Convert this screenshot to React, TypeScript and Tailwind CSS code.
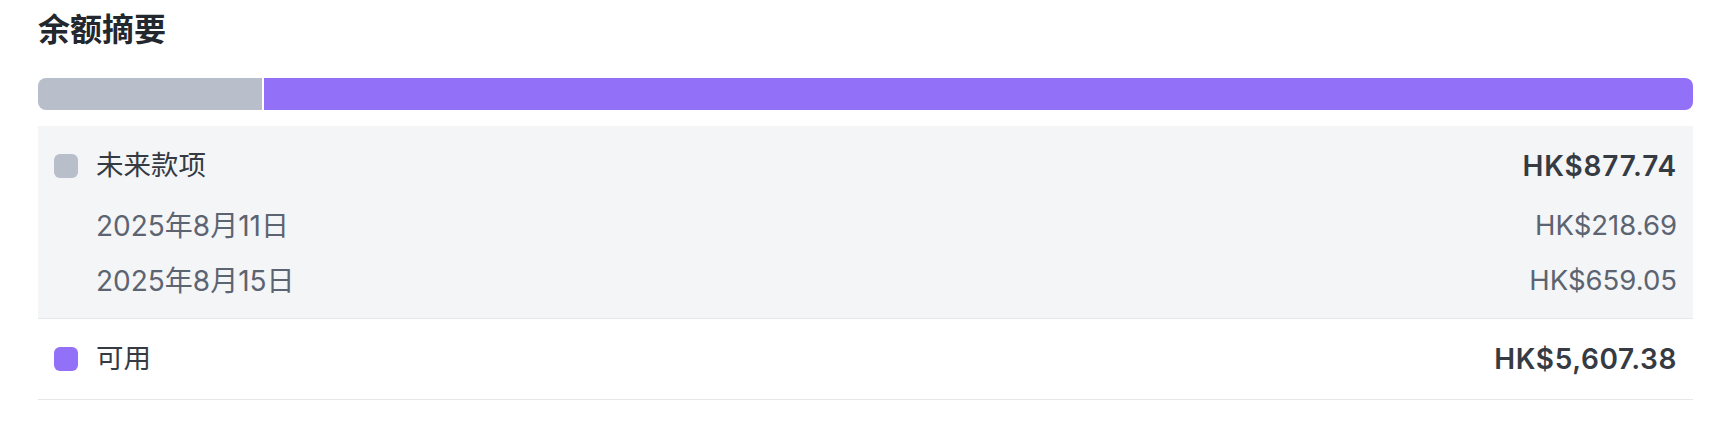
export default function App() {
  const future = 877.74;
  const available = 5607.38;
  const pct = (future / (future + available)) * 100;

  const items = [
    { date: "2025年8月11日", amount: "HK$218.69" },
    { date: "2025年8月15日", amount: "HK$659.05" },
  ];

  return (
    <div
      className="bg-white w-[1724px] h-[430px] pl-[38px] pr-[31px] pt-[10px]"
      style={{ fontFamily: 'Inter, "Noto Sans CJK SC", sans-serif' }}
    >
      <h2 className="text-[32px] leading-[40px] font-semibold text-[#23272e]">余额摘要</h2>

      <div className="mt-[28px] flex h-[32px] w-full gap-[2px] rounded-[8px] overflow-hidden">
        <div className="h-full bg-[#b8bfca]" style={{ width: `${pct}%` }} />
        <div className="h-full flex-1 bg-[#9370f8]" />
      </div>

      <div className="mt-[16px] bg-[#f4f5f7] px-[16px] pt-[16px] pb-[10px] border-b border-[#e6e7eb]">
        <div className="flex items-center justify-between h-[48px]">
          <div className="flex items-center gap-[18px]">
            <span className="w-[24px] h-[24px] rounded-[6px] bg-[#b8bfca]" />
            <span className="text-[27.5px] text-[#363b43]">未来款项</span>
          </div>
          <span className="text-[28px] font-semibold tracking-[0.8px] text-[#363b43]">HK${future.toFixed(2)}</span>
        </div>
        <div className="mt-[8px]">
          {items.map((it) => (
            <div key={it.date} className="flex items-center justify-between h-[55px] pl-[42px]">
              <span className="text-[28px] text-[#5c6472]">{it.date}</span>
              <span className="text-[27.5px] text-[#5c6472]">{it.amount}</span>
            </div>
          ))}
        </div>
      </div>

      <div className="flex items-center justify-between h-[81px] px-[16px] border-b border-[#e6e7eb]">
        <div className="flex items-center gap-[18px]">
          <span className="w-[24px] h-[24px] rounded-[6px] bg-[#9370f8]" />
          <span className="text-[27.5px] text-[#363b43]">可用</span>
        </div>
        <span className="text-[28px] font-semibold tracking-[0.6px] text-[#363b43]">HK$5,607.38</span>
      </div>
    </div>
  );
}
